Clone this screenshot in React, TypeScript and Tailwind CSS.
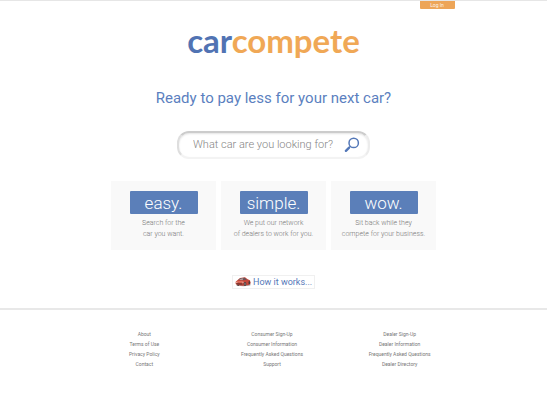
import React from "react";

const features = [
  { title: "easy.", lines: ["Search for the", "car you want."] },
  { title: "simple.", lines: ["We put our network", "of dealers to work for you."] },
  { title: "wow.", lines: ["Sit back while they", "compete for your business."] },
];

const linkColumns = [
  ["About", "Terms of Use", "Privacy Policy", "Contact"],
  ["Consumer Sign-Up", "Consumer Information", "Frequently Asked Questions", "Support"],
  ["Dealer Sign-Up", "Dealer Information", "Frequently Asked Questions", "Dealer Directory"],
];

function SearchIcon() {
  return (
    <svg viewBox="0 0 16 16" className="h-4 w-4" fill="none" stroke="#5478b8" aria-hidden="true">
      <circle cx="9.7" cy="5.9" r="4.7" strokeWidth="1.5" />
      <path d="M6.4 9.3 L4.8 10.9" strokeWidth="1.4" />
      <path d="M4.9 10.8 L1.9 13.8" strokeWidth="2.4" strokeLinecap="round" />
    </svg>
  );
}

function CarIcon() {
  return (
    <svg viewBox="0 0 48 30" className="h-[10px] w-4 shrink-0" aria-hidden="true">
      <ellipse cx="25" cy="23" rx="22" ry="5" fill="#a9a5a4" />
      <path d="M2 14 L8 9 L15 3 L30 1 L38 7 L45 10 L47 19 L42 24 L24 26 L9 25 L2 21 Z" fill="#c4473a" />
      <path d="M10 9 L16 4 L29 2 L35 8 L25 10 Z" fill="#6a5258" />
      <path d="M12 9 L17 5 L25 4 L23 9 Z" fill="#b59c9c" />
      <path d="M4 13 L22 11 L28 15 L18 17 L4 16 Z" fill="#e0705e" />
      <path d="M3 18 L22 19 L22 23 L8 23 Z" fill="#7d3730" />
      <path d="M3 15 L8 16 L7 18 L3 17 Z M20 17 L26 15 L25 18 L21 19 Z" fill="#e6bfb3" />
      <ellipse cx="30" cy="21" rx="4" ry="6" fill="#4a3a3b" />
      <ellipse cx="30" cy="21" rx="2" ry="3.4" fill="#8d8080" />
      <ellipse cx="43" cy="17" rx="2.6" ry="5" fill="#4a3a3b" />
      <path d="M7 23 L12 24 L11 27 L7 26 Z" fill="#4a3a3b" />
    </svg>
  );
}

export default function App() {
  return (
    <div className="bg-white font-['Roboto',sans-serif]">
      <header className="h-[9px] border-t border-[#e6e6e6]">
        <div className="mx-auto flex max-w-[362px] justify-end">
          <button
            type="button"
            className="h-2 w-[35px] rounded-b-[1px] bg-[#eda558] text-center text-[5px] leading-2 text-[#fdf3e8]"
          >
            Log In
          </button>
        </div>
      </header>

      <main className="flex flex-col items-center">
        <div className="mt-[11px] font-['Lato',sans-serif] text-[33px] leading-[40px] font-bold">
          <span className="text-[#5173b3]">car</span>
          <span className="text-[#f0a856]">compete</span>
        </div>

        <h1 className="mt-[27px] text-[15px] leading-[22px] text-[#5b7fc0]">Ready to pay less for your next car?</h1>

        <form
          role="search"
          onSubmit={(event) => event.preventDefault()}
          className="mt-[22px] flex h-7 w-[193px] items-center rounded-[12px] border-2 border-t-[#cccccc] border-r-[#ececec] border-b-[#f3f3f3] border-l-[#dedede] pr-2 pl-[14px] shadow-[inset_0_1px_2px_#e4e4e4]"
        >
          <input
            type="text"
            aria-label="What car are you looking for?"
            placeholder="What car are you looking for?"
            className="min-w-0 flex-1 bg-transparent text-[11px] leading-4 font-light outline-none placeholder:text-[#858585]"
          />
          <button type="submit" aria-label="Search">
            <SearchIcon />
          </button>
        </form>

        <section className="mt-[22px] grid w-full max-w-[325px] grid-cols-3 gap-[5px]">
          {features.map((feature) => (
            <article key={feature.title} className="flex h-[69px] flex-col items-center bg-[#f9f9f9] pt-[10px]">
              <h2 className="h-[23px] w-[68px] rounded-[1px] bg-[#5b7fb9] text-center text-[17px] leading-6 font-light text-white">
                {feature.title}
              </h2>
              <p className="mt-1 text-center text-[7px] leading-[11px] whitespace-nowrap font-light text-[#777777]">
                {feature.lines[0]}
                <br />
                {feature.lines[1]}
              </p>
            </article>
          ))}
        </section>

        <a
          href="#how-it-works"
          className="mt-[25px] flex h-[14px] w-[83px] items-center gap-[2px] border border-[#f0f0f0] pl-[2px] text-[9px] leading-3 whitespace-nowrap text-[#5578b8]"
        >
          <CarIcon />
          How it works...
        </a>
      </main>

      <footer className="mt-[19px] border-t-2 border-[#e8e8e8] pt-[19px]">
        <nav className="mx-auto grid max-w-[386px] grid-cols-3 pr-[3px]">
          {linkColumns.map((links, column) => (
            <ul key={column} className="text-center text-[5px] leading-[10px] text-[#777777]">
              {links.map((label) => (
                <li key={label}>
                  <a href="#">{label}</a>
                </li>
              ))}
            </ul>
          ))}
        </nav>
      </footer>
    </div>
  );
}
